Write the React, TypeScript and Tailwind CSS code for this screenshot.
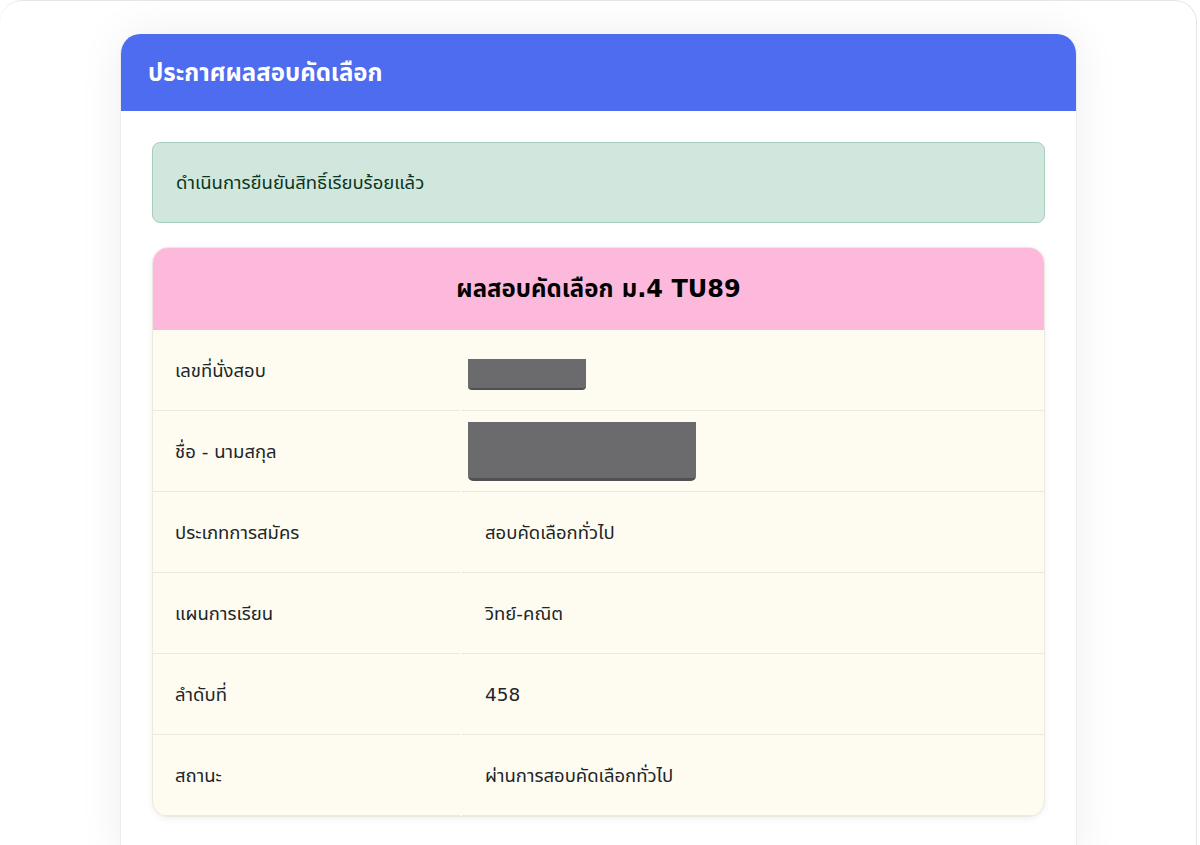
import React from 'react';

interface Row {
  label: string;
  value?: string;
  redact?: 'short' | 'long';
}

const rows: Row[] = [
  { label: 'เลขที่นั่งสอบ', redact: 'short' },
  { label: 'ชื่อ - นามสกุล', redact: 'long' },
  { label: 'ประเภทการสมัคร', value: 'สอบคัดเลือกทั่วไป' },
  { label: 'แผนการเรียน', value: 'วิทย์-คณิต' },
  { label: 'ลำดับที่', value: '458' },
  { label: 'สถานะ', value: 'ผ่านการสอบคัดเลือกทั่วไป' },
];

export default function App() {
  return (
    <div
      className="h-[845px] w-[1200px] overflow-hidden bg-white"
      style={{ fontFamily: '"DejaVu Sans", "Noto Sans Thai", sans-serif' }}
    >
      {/* outer screen frame */}
      <div className="h-[900px] w-[1197px] rounded-t-[22px] border-r border-t border-[#e9e6e2] bg-white pt-[33px]">
        {/* main card */}
        <div className="ml-[120px] w-[957px] overflow-hidden rounded-t-[20px] border-l border-r border-[#ececec] bg-white shadow-[0_0_45px_rgba(0,0,0,0.07)]">
          <div className="flex h-[77px] items-center bg-[#4d6cf0] px-[27px]">
            <h1 className="text-[24px] font-bold text-white">ประกาศผลสอบคัดเลือก</h1>
          </div>

          <div className="px-[31px] pb-[40px] pt-[31px]">
            {/* success alert */}
            <div className="flex h-[81px] items-center rounded-[8px] border border-[#a3cfbb] bg-[#d1e7dd] px-[23px] text-[18.5px] text-[#0a3622]">
              ดำเนินการยืนยันสิทธิ์เรียบร้อยแล้ว
            </div>

            {/* result table */}
            <div className="mt-[24px] overflow-hidden rounded-[16px] border border-[#ebe8df] bg-[#fefcf0] shadow-[0_2px_6px_rgba(0,0,0,0.06)]">
              <div className="flex h-[82px] items-center justify-center bg-[#fdb9dc]">
                <h2 className="text-[24px] font-bold text-black">ผลสอบคัดเลือก ม.4 TU89</h2>
              </div>
              <div className="grid grid-cols-[307px_1fr] gap-x-[2px]">
                {rows.map((r, i) => (
                  <React.Fragment key={i}>
                    <div className="flex h-[81px] items-center border-b border-[#ebe8e0] pl-[22px] pt-[2px] text-[18.5px] text-[#212529]">
                      {r.label}
                    </div>
                    <div className="flex h-[81px] items-center border-b border-[#ebe8e0] pl-[23px] pt-[2px] text-[18.5px] text-[#212529]">
                      {r.redact === 'short' && (
                        <div className="-ml-[17px] mt-[6px] h-[31px] w-[118px] rounded-b-[4px] border-b-[2px] border-[#505054] bg-[#6b6b6e]" />
                      )}
                      {r.redact === 'long' && (
                        <div className="-ml-[17px] -mt-[2px] h-[59px] w-[228px] rounded-b-[5px] border-b-[3px] border-[#505056] bg-[#6b6b6e]" />
                      )}
                      {r.value}
                    </div>
                  </React.Fragment>
                ))}
              </div>
            </div>
          </div>
        </div>
      </div>
    </div>
  );
}
